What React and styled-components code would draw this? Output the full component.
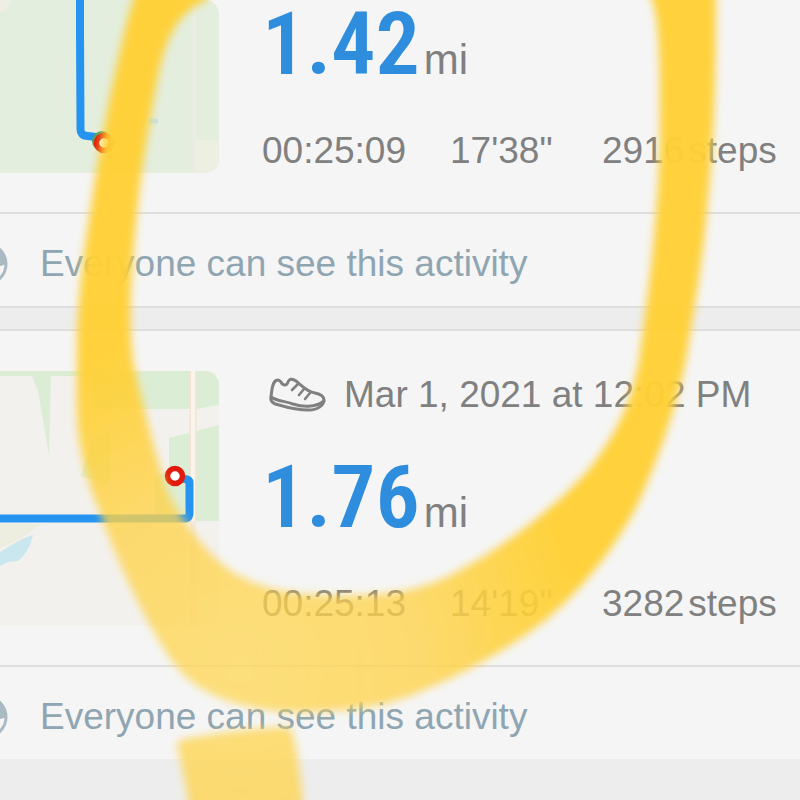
import React from 'react';
import styled, { createGlobalStyle } from 'styled-components';

const activities = [
    {
        id: 1,
        map: 'park',
        distance: '1.42',
        duration: '00:25:09',
        pace: '17\'38"',
        steps: 2916,
    },
    {
        id: 2,
        map: 'lake',
        date: 'Mar 1, 2021 at 12:02 PM',
        distance: '1.76',
        duration: '00:25:13',
        pace: '14\'19"',
        steps: 3282,
    },
];

const RouteEnd = ({ x, y }) => (
    <circle cx={x} cy={y} r="7.5" fill="#fff" stroke="#e01a0c" strokeWidth="5.5" />
);

const ParkMap = () => (
    <Map width="219" height="173" viewBox="0 0 219 173" aria-label="Route map">
        <rect width="219" height="173" fill="#e3eede" />
        <path d="M0 0H11Q9 11 0 13Z" fill="#eeeee4" />
        <path d="M196 140H219V173H196Z" fill="#ecefe2" />
        <path d="M194.500 0V173" stroke="#eeeae8" strokeWidth="3" />
        <path d="M93 0V173" stroke="#e6ece2" strokeWidth="1" />
        <path d="M149 121H158" stroke="#c4e2ea" strokeWidth="5" />
        <path
            d="M80 -4V30L80.500 128Q80 136 88 136L104 138"
            fill="none"
            stroke="#2494f0"
            strokeWidth="8"
        />
        <circle cx="102" cy="141" r="10" fill="#4f9f6b" />
        <RouteEnd x={104} y={143} />
    </Map>
);

const LakeMap = () => (
    <Map width="219" height="255" viewBox="0 0 219 255" aria-label="Route map">
        <rect width="219" height="255" fill="#f3f1ee" />
        <path d="M0 0H219V34L196 38H92V5H0Z" fill="#dcedd6" />
        <path d="M32 5H51L49 84L38 20Z" fill="#dcedd6" />
        <path d="M92 68L81 105L110 114V60Z" fill="#dcedd6" />
        <path d="M169 67L219 54V150H155V105L169 100Z" fill="#dcedd6" />
        <path d="M0 153H42L20 168L0 178Z" fill="#eeeee0" />
        <path d="M33 164Q30 180 18 190L8 191L0 195V181Q20 168 33 164Z" fill="#cae6ee" />
        <path d="M193 0V150" stroke="#f4e3d6" strokeWidth="7" />
        <path d="M193 0V150" stroke="#fbf4ea" strokeWidth="4" />
        <path d="M193 150V255" stroke="#f1ebe3" strokeWidth="6" />
        <path
            d="M-4 147.500H185Q190 147.500 189.500 140V112Q189.500 108 184 108L176 107"
            fill="none"
            stroke="#2494f0"
            strokeWidth="8"
        />
        <RouteEnd x={175} y={105} />
    </Map>
);

const ShoeIcon = () => (
    <svg width="60" height="40" viewBox="0 0 60 40" fill="none" stroke="#808080" strokeWidth="3" strokeLinecap="round" strokeLinejoin="round" aria-hidden="true">
        <path d="M10 5C6 5 5 9 4 14L3 22C2 27 6 29 11 30C21 33 32 35 41 35C50 35 56 30 56 25C56 21 52 19 47 18C39 17 33 10 28 6C24 3 21 4 20 7C19 11 15 11 13 7C12 6 11 5 10 5Z" />
        <path d="M3 22C8 26 17 26 25 29C34 32 47 33 56 26" />
        <path d="M30 9L24 15M36 14L31 20M42 18L37 24" strokeWidth="2.6" />
    </svg>
);

const GlobeIcon = () => (
    <svg width="8" height="44" viewBox="0 0 8 44" aria-hidden="true">
        <circle cx="-14" cy="22" r="20" fill="none" stroke="#a9bac3" strokeWidth="3" />
        <path d="M-14 2A20 20 0 0 1 6 22L4 23L0 24V22L-14 20Z" fill="#a9bac3" />
    </svg>
);

const MarkerStroke = () => (
    <Overlay viewBox="0 0 800 800" aria-hidden="true">
        <defs>
            <radialGradient id="ink" gradientUnits="userSpaceOnUse" cx="240" cy="670" r="350">
                <stop offset="0" stopColor="#ffd650" stopOpacity="0.74" />
                <stop offset="0.5" stopColor="#ffd34a" stopOpacity="0.78" />
                <stop offset="0.8" stopColor="#ffd13a" stopOpacity="0.88" />
                <stop offset="1.0" stopColor="#ffd035" stopOpacity="0.97" />
            </radialGradient>
            <filter id="soft" x="-10%" y="-10%" width="120%" height="120%">
                <feGaussianBlur stdDeviation="4" />
            </filter>
        </defs>
        <g fill="url(#ink)" filter="url(#soft)">
            <path
                d="M144 -30L133 0C121 40 104 120 92 200C82 260 77 310 77 350V410C78 450 87 480 99 510C117 560 129 585 151 627C167 655 180 678 208 692C235 707 275 713 310 712C350 711 385 706 410 696C450 680 500 656 547 619C590 582 619 540 637 506C659 458 677 405 686 360C696 300 704 250 708 200C715 130 716 60 716 0V-30H640L652 0C660 20 660 80 660 120C660 200 650 280 641 345C635 400 615 435 590 468C560 503 510 543 460 570C430 587 400 594 360 595C310 597 268 592 238 575C208 557 185 525 168 492C155 455 143 405 134 365C129 340 130 290 133 260C138 190 146 140 157 82C165 40 175 15 206 0L220 -30Z"
            />
            <path d="M177 746Q177 739 190 738Q245 728 290 727Q299 745 305 830H192Q186 780 177 746Z" />
        </g>
    </Overlay>
);

const Activity = ({ activity }) => (
    <Card $cut={!activity.date}>
        <Summary>
            {activity.map === 'park' ? <ParkMap /> : <LakeMap />}
            <Details>
                {activity.date && (
                    <Header>
                        <ShoeIcon />
                        <time>{activity.date}</time>
                    </Header>
                )}
                <Distance>
                    <strong>{activity.distance}</strong>
                    <span>mi</span>
                </Distance>
                <Stats>
                    <span>{activity.duration}</span>
                    <Pace>{activity.pace}</Pace>
                    <Steps>
                        <span>{activity.steps}</span>
                        <span>steps</span>
                    </Steps>
                </Stats>
            </Details>
        </Summary>
        <Privacy>
            <GlobeIcon />
            <span>Everyone can see this activity</span>
        </Privacy>
    </Card>
);

const App = () => (
    <>
        <GlobalStyle />
        <Feed>
            {activities.map((activity) => (
                <Activity key={activity.id} activity={activity} />
            ))}
            <MarkerStroke />
        </Feed>
    </>
);

export default App;

const GlobalStyle = createGlobalStyle`
    * {
        box-sizing: border-box;
    }

    body {
        margin: 0;
        background-color: #ededed;
        font-family: 'Liberation Sans', Arial, sans-serif;
        font-size: 37px;
        line-height: 44px;
        color: #808080;
    }
`;

const Feed = styled.main`
    display: flex;
    flex-direction: column;
    gap: 21px;
    position: relative;
    min-height: 100vh;
    overflow: hidden;
`;

const Card = styled.article`
    padding-top: ${({ $cut }) => ($cut ? '0' : '40px')};
    border-top: ${({ $cut }) => ($cut ? 'none' : '2px solid #dedede')};
    background-color: #f5f5f5;

    &:first-child {
        border-bottom: 2px solid #dedede;
    }
`;

const Summary = styled.div`
    display: flex;
    align-items: flex-end;
    gap: 43px;
    padding-bottom: 39px;
`;

const Map = styled.svg`
    flex-shrink: 0;
    border-radius: 0 14px 14px 0;
`;

const Details = styled.div`
    flex: 1;
    min-width: 0;
    white-space: nowrap;
`;

const Header = styled.header`
    display: flex;
    align-items: center;
    gap: 16px;
    margin-bottom: 36px;
    padding-left: 6px;
`;

const Distance = styled.div`
    display: flex;
    align-items: baseline;
    gap: 4px;
    height: 84px;
    margin-bottom: 45px;

    strong {
        font-family: 'Roboto Condensed', 'Open Sans Condensed', 'Noto Sans Condensed', 'Liberation Sans', sans-serif;
        font-size: 88px;
        line-height: 88px;
        font-weight: 600;
        color: #2f8ddd;
    }

    span {
        font-size: 42px;
    }
`;

const Stats = styled.div`
    display: flex;
    gap: 44px;
`;

const Pace = styled.span`
    min-width: 108px;
`;

const Steps = styled.span`
    display: flex;
    gap: 4px;
`;

const Privacy = styled.footer`
    display: flex;
    gap: 32px;
    padding: 28px 0 20px;
    border-top: 2px solid #dedede;
    color: #8fa5b2;
`;

const Overlay = styled.svg`
    position: absolute;
    top: 0;
    left: 0;
    width: 100%;
    pointer-events: none;
`;
